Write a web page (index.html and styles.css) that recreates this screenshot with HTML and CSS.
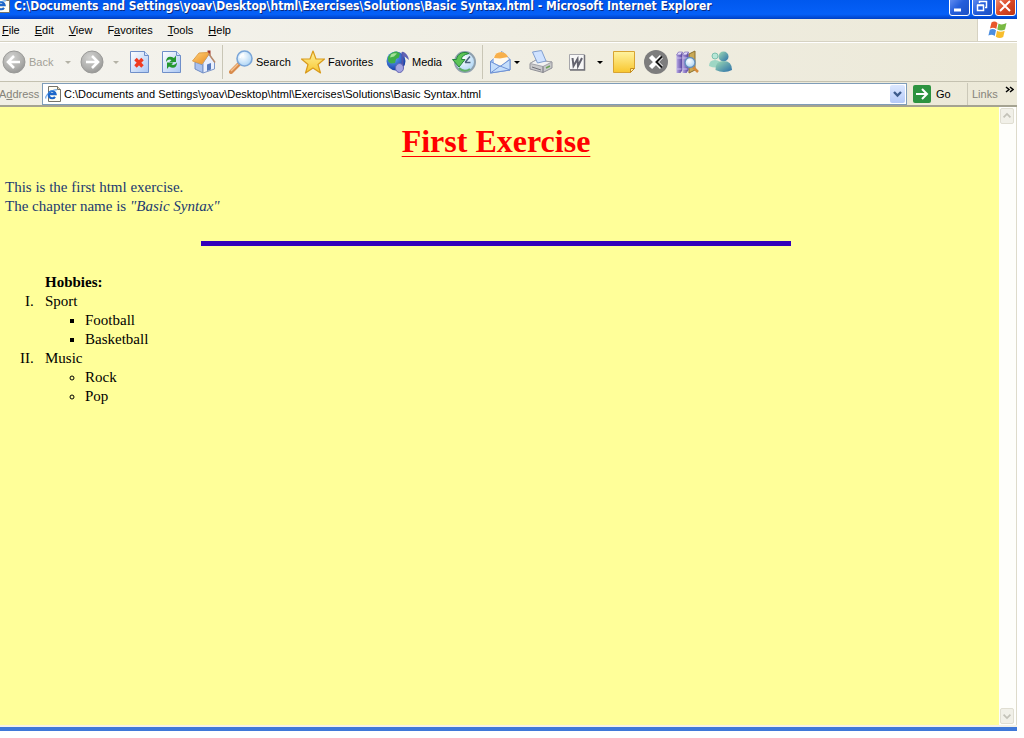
FILE: index.html
```html
<!DOCTYPE html>
<html lang="en">
<head>
<meta charset="utf-8">
<title>Basic Syntax</title>
<link rel="stylesheet" href="styles.css">
</head>
<body>
<svg width="0" height="0" class="defs" aria-hidden="true">
  <defs>
    <radialGradient id="gray" cx=".4" cy=".3" r=".8"><stop offset="0" stop-color="#d2d2d0"/><stop offset=".6" stop-color="#b0b0ae"/><stop offset="1" stop-color="#8e8e8c"/></radialGradient>
    <linearGradient id="sheet" x1="0" y1="0" x2="1" y2="1"><stop offset="0" stop-color="#fff"/><stop offset="1" stop-color="#a9c6f3"/></linearGradient>
    <linearGradient id="gold" x1="0" y1="0" x2="0" y2="1"><stop offset="0" stop-color="#fff3a0"/><stop offset="1" stop-color="#f8c62e"/></linearGradient>
    <radialGradient id="lens" cx=".4" cy=".35" r=".7"><stop offset="0" stop-color="#fff"/><stop offset="1" stop-color="#a9d3f5"/></radialGradient>
    <radialGradient id="globe" cx=".35" cy=".3" r=".8"><stop offset="0" stop-color="#6ab0ff"/><stop offset="1" stop-color="#0b2f9c"/></radialGradient>
    <linearGradient id="orange" x1="0" y1="0" x2="1" y2="1"><stop offset="0" stop-color="#ffd27a"/><stop offset="1" stop-color="#ea8a1e"/></linearGradient>
    <linearGradient id="teal" x1="0" y1="0" x2="1" y2="1"><stop offset="0" stop-color="#9fdcb4"/><stop offset="1" stop-color="#2b6fa8"/></linearGradient>
    <linearGradient id="violet" x1="0" y1="0" x2="1" y2="0"><stop offset="0" stop-color="#b9aae6"/><stop offset="1" stop-color="#54409c"/></linearGradient>
    <symbol id="page-e" viewBox="0 0 16 16"><path d="M3.500.500h9l3 3v12h-12z" fill="#fffdf2" stroke="#75736a"/><path d="M12.500.500v3h3" fill="#e8d9b0" stroke="#75736a"/><path d="M10 10.800a3.500 3.500 0 1 1 .6-2.600H4" fill="none" stroke="#1d66c9" stroke-width="2.200"/><path d="M.800 12.500C0 9 6 3.500 12 3.800" fill="none" stroke="#3f8be0"/></symbol>
  </defs>
</svg>
<div class="window">
  <header class="titlebar">
    <svg class="icon16" viewBox="0 0 16 16"><use href="#page-e"/></svg>
    <span class="title">C:\Documents and Settings\yoav\Desktop\html\Exercises\Solutions\Basic Syntax.html - Microsoft Internet Explorer</span>
    <div class="controls">
      <button class="control" aria-label="Minimize"><svg viewBox="0 0 18 18"><path d="M4 13h7" stroke="#fff" stroke-width="3"/></svg></button>
      <button class="control" aria-label="Restore"><svg viewBox="0 0 18 18"><path d="M6.500 6V4.500h7v6H12M6 4.500h8M4.500 8.500h6v5h-6zM4 8h7" fill="none" stroke="#fff" stroke-width="1.500"/></svg></button>
      <button class="control close" aria-label="Close"><svg viewBox="0 0 18 18"><path d="M4 4l10 10M14 4L4 14" stroke="#fff" stroke-width="2"/></svg></button>
    </div>
  </header>

  <nav class="menubar">
    <button><u>F</u>ile</button><button><u>E</u>dit</button><button><u>V</u>iew</button><button>F<u>a</u>vorites</button><button><u>T</u>ools</button><button><u>H</u>elp</button>
    <span class="flag"><svg viewBox="0 0 20 18"><path d="M3.500 1.500Q6.500-.500 9.500 2L8.300 8Q5.500 6 2 7.500z" fill="#e8562a"/><path d="M10.500 2.500Q14 4.500 18.500 2L17 8.500Q13 10.500 9.300 8.500z" fill="#79b943"/><path d="M1.800 8.700Q5 7 8 9.200L6.700 15Q4 13 .400 14.500z" fill="#4c8ee0"/><path d="M9 9.800Q12.500 11.700 16.700 9.700L15.200 16Q11.500 18 7.800 15.700z" fill="#f8bd2c"/></svg></span>
  </nav>

  <div class="toolbar">
    <div class="group back">
      <button class="tool dim" disabled><svg viewBox="0 0 24 24"><circle cx="12" cy="12" r="11" fill="url(#gray)" stroke="#9a9a98"/><path d="M18 12H7M12 6l-6 6 6 6" fill="none" stroke="#fff" stroke-width="2.600"/></svg>Back</button>
      <button class="drop" aria-label="Back history" disabled></button>
    </div>
    <div class="group forward">
      <button class="tool" aria-label="Forward" disabled><svg viewBox="0 0 24 24"><circle cx="12" cy="12" r="11" fill="url(#gray)" stroke="#9a9a98"/><path d="M6 12h11M12 6l6 6-6 6" fill="none" stroke="#fff" stroke-width="2.600"/></svg></button>
      <button class="drop" aria-label="Forward history" disabled></button>
    </div>
    <button class="tool" aria-label="Stop"><svg viewBox="0 0 24 24"><path d="M2.500 1.500h14l4 4v17h-18z" fill="url(#sheet)" stroke="#6f8fc9"/><path d="M16.500 1.500v4h4" fill="#d6e4fb" stroke="#6f8fc9"/><path d="M7.500 9l7 7.500M14.500 9l-7 7.500" stroke="#f03a20" stroke-width="3.400"/></svg></button>
    <button class="tool" aria-label="Refresh"><svg viewBox="0 0 24 24"><path d="M2.500 1.500h14l4 4v17h-18z" fill="url(#sheet)" stroke="#6f8fc9"/><path d="M16.500 1.500v4h4" fill="#d6e4fb" stroke="#6f8fc9"/><path d="M6 12C6 6.500 10 5.500 14 8l2-2.500v6.500h-6.500l2-2Q8.500 8.500 6 12z" fill="#25982f"/><path d="M17 12.500c0 5.500-4 6.500-8 4l-2 2.500v-6.500h6.500l-2 2q3 1.500 5.500-2z" fill="#25982f"/></svg></button>
    <button class="tool" aria-label="Home"><svg viewBox="0 0 24 24"><path d="M15.500.500h3v6h-3z" fill="#a3362b"/><path d="M3 12l8 3v8l-8-4z" fill="#a9c1ee" stroke="#6f8cc2"/><path d="M11 13l6-9 5.500 8v7L11 23z" fill="#e9effd" stroke="#7b95c8"/><path d="M.500 11L7 3l9-.500 1 1.500-7 10z" fill="url(#orange)" stroke="#e0a04a"/><path d="M16.500 3.500l6.500 9" stroke="#b98a68" stroke-width="1.500"/><path d="M15 14.500l4-1.500v6.500l-4 1.500z" fill="#5579bd"/></svg></button>
    <i class="sep"></i>
    <button class="tool search"><svg viewBox="0 0 24 24"><path d="M2 22l8-8" stroke="#d88b4c" stroke-width="4" stroke-linecap="round"/><path d="M2 21l7-7" stroke="#f5c38f" stroke-width="1.500"/><circle cx="15.500" cy="8.500" r="7.500" fill="url(#lens)" stroke="#7ba6d8" stroke-width="1.600"/><path d="M11 8a5 5 0 0 1 4-4" fill="none" stroke="#fff" stroke-width="1.500"/></svg>Search</button>
    <button class="tool favorites"><svg viewBox="0 0 24 24"><path d="M12 1l3 8h8.500l-6.500 5.500L19.500 23 12 18l-7.500 5L7 14.500.500 9H9z" fill="url(#gold)" stroke="#d99b1c" stroke-width="1.200" stroke-linejoin="round"/></svg>Favorites</button>
    <button class="tool media"><svg viewBox="0 0 24 24"><circle cx="10" cy="11" r="9.500" fill="url(#globe)"/><path d="M2 7Q5 1.500 11 1.500l3 2-1 4-3 1.500-1 4-4 .500Q1 12 2 7z" fill="#3fae48"/><path d="M5 4.500q3-2 6-1l-3 3-4 1z" fill="#a4e29a"/><path d="M16.500 2v16" stroke="#5355a8" stroke-width="1.800"/><path d="M16.500 1.500q5.500 2 6.500 8.500l-2-1.500q-1-2-4.500-2z" fill="#6163b4"/><ellipse cx="13.500" cy="18" rx="4" ry="4.500" fill="#a5a5e2" stroke="#6668b4"/></svg>Media</button>
    <button class="tool" aria-label="History"><svg viewBox="0 0 24 24"><circle cx="13" cy="12" r="10" fill="url(#lens)" stroke="#8fa0ae" stroke-width="2"/><path d="M13 12.500l5-6M13 12.500h5.500" stroke="#49617c" stroke-width="1.500"/><path d="M17 3.500C12 1 5.500 3 4.500 9.500H.500L7 17l6-7.500h-3.500q0-4.500 7.500-6z" fill="#5cc456" stroke="#23853c"/><path d="M7 18q5 5 11 1" fill="none" stroke="#5caf67" stroke-width="2"/></svg></button>
    <i class="sep"></i>
    <div class="group mail">
      <button class="tool" aria-label="Mail"><svg viewBox="0 0 24 24"><path d="M1.500 11.500L13 1.500l8 8V20L1.500 23z" fill="#9cbcf0" stroke="#6f92d4"/><path d="M4.500 7Q8 .500 14 2.500L20 9l-8 7-7-3z" fill="#fffaf0"/><path d="M5 8q1-6 7.500-6 5 1 6.500 5l-8 1.500z" fill="#f7b04c"/><path d="M1.500 11.500l9.500 5 10-7V20L1.500 23z" fill="#c5defb" stroke="#6f92d4"/><path d="M1.500 23l9.500-7 10 4" fill="none" stroke="#6f92d4"/></svg></button>
      <button class="drop" aria-label="Mail options"></button>
    </div>
    <button class="tool" aria-label="Print"><svg viewBox="0 0 24 24"><path d="M1 13.500l6-3.500 16 2v6l-9 4.500-13-3.500z" fill="#c9c9cb" stroke="#909096"/><path d="M1 13.500l6-3.500 16 2-9 4.500z" fill="#f2f2f2" stroke="#a2a2a8"/><path d="M3.500 2l9-1.500L17 11l-8.500 2z" fill="#cfe2ff" stroke="#829fce"/><path d="M14 16.500v6M3 17l9 3" stroke="#707078"/><path d="M17 18l4-2" stroke="#6ba256" stroke-width="1.500"/></svg></button>
    <div class="group word">
      <button class="tool" aria-label="Edit with Word"><svg viewBox="0 0 24 24"><path d="M4.500 4.500h15v15h-15z" fill="#f7f7f7" stroke="#a6a6ab"/><path d="M19.500 5v15H5" fill="none" stroke="#717178" stroke-width="1.500"/><path d="M7.500 8l1 8 4-7 .500 7L17 8" fill="none" stroke="#62626e" stroke-width="2"/></svg></button>
      <button class="drop" aria-label="Edit options"></button>
    </div>
    <button class="tool" aria-label="Discuss"><svg viewBox="0 0 24 24"><path d="M1.500 1.500h21v17l-4 4h-17z" fill="url(#gold)" stroke="#d8a432"/><path d="M18.500 22.500v-4h4z" fill="#fff0a4" stroke="#c58d1f"/></svg></button>
    <button class="tool" aria-label="Disconnect"><svg viewBox="0 0 24 24"><circle cx="12" cy="12" r="12" fill="#7d7d7d"/><path d="M6.500 6.500l11 11M17.500 6.500l-11 11" stroke="#fff" stroke-width="4.500"/><path d="M18 6.500l-5.500 5.500 5.500 5.500" fill="none" stroke="#111" stroke-width="2"/></svg></button>
    <button class="tool" aria-label="Research"><svg viewBox="0 0 24 24"><path d="M13 4l6-3v19l-6 3z" fill="#c9a955" stroke="#8a6f30"/><path d="M.500 5l2-3h4v18l-2 3h-4z" fill="url(#violet)"/><path d="M6.500 5l2-3h4v18l-2 3h-4z" fill="url(#violet)"/><path d="M.500 5l2-3h4l-2 3zM6.500 5l2-3h4l-2 3z" fill="#e2dbf8" stroke="#6f5db0" stroke-width=".600"/><path d="M.500 8h5M6.500 8h5M.500 19h5M6.500 19h5" stroke="#cbbfee"/><path d="M17 17l5 5" stroke="#d68b3c" stroke-width="2.500"/><circle cx="14" cy="12.500" r="5" fill="url(#lens)" stroke="#648fbd" stroke-width="1.400"/></svg></button>
    <button class="tool" aria-label="Messenger"><svg viewBox="0 0 24 24"><circle cx="7" cy="6" r="3" fill="#b7e6d6" stroke="#7cc0ae"/><path d="M1 16q0-6 6-6t6 6q-5 3-12 0z" fill="#9ed6c4"/><circle cx="15.500" cy="6.500" r="5" fill="url(#teal)"/><path d="M7.500 20q-.500-9 8-9t8.500 9q-8 4-16.500 0z" fill="url(#teal)"/></svg></button>
  </div>

  <form class="addressbar">
    <label for="address">A<u>d</u>dress</label>
    <div class="field">
      <svg class="icon16" viewBox="0 0 16 16"><use href="#page-e"/></svg>
      <input id="address" type="text" value="C:\Documents and Settings\yoav\Desktop\html\Exercises\Solutions\Basic Syntax.html">
      <button type="button" class="picker" aria-label="Show addresses"><svg viewBox="0 0 15 18"><path d="M4 7l3.500 3.500L11 7" fill="none" stroke="#3d5b8c" stroke-width="2.400"/></svg></button>
    </div>
    <button type="button" class="go"><svg viewBox="0 0 18 18"><rect width="18" height="18" rx="2" fill="#2d9340"/><path d="M3 9h10M9 4l5 5-5 5" fill="none" stroke="#fff" stroke-width="2"/></svg>Go</button>
    <div class="links"><span>Links</span><svg viewBox="0 0 9 8"><path d="M1 1l3 2.500L1 6M5 1l3 2.500L5 6" fill="none" stroke="#000" stroke-width="1.500"/></svg></div>
  </form>

  <div class="viewport">
    <main class="document">
      <h1>First Exercise</h1>
      <p>This is the first html exercise.<br>The chapter name is <em>"Basic Syntax"</em></p>
      <hr>
      <div class="hobbies">
        <h2>Hobbies:</h2>
        <ol>
          <li>Sport<ul class="square"><li>Football</li><li>Basketball</li></ul></li>
          <li>Music<ul class="circle"><li>Rock</li><li>Pop</li></ul></li>
        </ol>
      </div>
    </main>
    <div class="scrollbar">
      <button aria-label="Scroll up" disabled><svg viewBox="0 0 14 15"><path d="M3 9l4-4 4 4" fill="none" stroke="#c3c2b8" stroke-width="2"/></svg></button>
      <button aria-label="Scroll down" disabled><svg viewBox="0 0 14 15"><path d="M3 6l4 4 4-4" fill="none" stroke="#c3c2b8" stroke-width="2"/></svg></button>
    </div>
  </div>
</div>
</body>
</html>
```
FILE: styles.css
```css
* { box-sizing: border-box; }
body {
  margin: 0;
  padding: 0 7px 7px 0;
  height: 100vh;
  background: #fff;
  font: 11px/14px "Liberation Sans", Arial, sans-serif;
  color: #000;
  overflow: hidden;
}
button {
  padding: 0;
  border: 0;
  background: none;
  font: inherit;
  color: inherit;
}
svg { display: block; flex: none; }
.defs { position: absolute; }
.icon16 { width: 16px; height: 16px; }
.window {
  height: 100%;
  display: flex;
  flex-direction: column;
  border-bottom: 4px solid #3f78d8;
  overflow: hidden;
}

.titlebar {
  display: flex;
  align-items: flex-end;
  height: 19px;
  flex: none;
  padding-right: 1px;
  background: linear-gradient(#0058ee, #0560f8 75%, #0040c4);
  color: #fff;
}
.titlebar .icon16 { margin: 0 4px 6px -6px; }
.title {
  flex: 1;
  min-width: 0;
  overflow: hidden;
  white-space: nowrap;
  font: bold 12px/16px "DejaVu Sans Condensed", "DejaVu Sans", sans-serif;
  padding-bottom: 5px;
  text-shadow: 1px 1px #0a2a80;
}
.controls { display: flex; gap: 2px; }
.control {
  width: 21px;
  height: 21px;
  margin-bottom: 3px;
  border: 1px solid #fff;
  border-radius: 3px;
  background: linear-gradient(135deg, #6f97f5, #245edb 50%, #1c50c4);
}
.control.close { background: linear-gradient(135deg, #f0987c, #dc4a28 50%, #bc3414); }
.control svg { width: 18px; height: 18px; }

.menubar {
  display: flex;
  align-items: center;
  height: 23px;
  flex: none;
  padding-left: 2px;
  gap: 15px;
  background: linear-gradient(90deg, #f4f3ee, #ece9d8);
  border-bottom: 1px solid #d6d2c2;
}
.flag {
  align-self: stretch;
  display: grid;
  place-items: center;
  width: 40px;
  margin-left: auto;
  background: #fff;
  border-left: 1px solid #d6d2c2;
}
.flag svg { width: 20px; height: 18px; }

.toolbar {
  display: flex;
  align-items: center;
  gap: 8px;
  height: 40px;
  flex: none;
  padding-left: 2px;
  background: linear-gradient(90deg, #f4f3ee, #ece9d8);
  border-top: 1px solid #fff;
  border-bottom: 1px solid #c4c1b0;
}
.group { display: flex; align-items: center; justify-content: space-between; }
.tool {
  display: flex;
  align-items: center;
  gap: 3px;
  min-width: 24px;
  white-space: nowrap;
}
.tool svg { width: 24px; height: 24px; }
.tool.dim { color: #a3a197; }
.back { width: 70px; }
.forward { width: 40px; }
.mail { width: 32px; }
.word { width: 43px; padding-left: 4px; }
.search { width: 64px; }
.favorites { width: 77px; }
.media { width: 58px; gap: 2px; }
.drop {
  width: 8px;
  height: 24px;
  display: grid;
  place-items: center;
}
.drop::before {
  content: "";
  border: 3px solid transparent;
  border-top-color: #000;
  border-bottom: 0;
}
.drop:disabled::before { border-top-color: #b4b2a6; }
.sep {
  width: 1px;
  height: 34px;
  margin: 0 -2px;
  background: #c9c6b6;
}

.addressbar {
  display: flex;
  align-items: center;
  height: 25px;
  flex: none;
  margin: 0;
  background: linear-gradient(90deg, #f1efe6, #ece9d8);
  border-bottom: 2px solid #a5a391;
}
.addressbar label {
  width: 43px;
  flex: none;
  margin-left: -1px;
  color: #85837a;
}
.field {
  flex: 1;
  min-width: 0;
  display: flex;
  align-items: center;
  height: 22px;
  padding: 1px 1px 1px 2px;
  background: #fff;
  border: 1px solid #7f9db9;
}
.field input {
  flex: 1;
  min-width: 0;
  height: 16px;
  margin-left: 3px;
  padding: 0;
  border: 0;
  outline: 0;
  background: none;
  font: inherit;
}
.picker {
  width: 15px;
  height: 18px;
  border-radius: 2px;
  background: linear-gradient(#dce8ff, #b5caf8);
}
.go {
  display: flex;
  align-items: center;
  gap: 5px;
  width: 54px;
  margin-left: 6px;
}
.go svg { width: 18px; height: 18px; }
.links {
  display: flex;
  justify-content: space-between;
  align-items: center;
  width: 50px;
  height: 22px;
  padding: 0 3px 0 4px;
  border-left: 1px solid #cbc8b8;
  color: #85837a;
}
.links svg { width: 9px; height: 8px; align-self: flex-start; margin-top: 3px; }

.viewport {
  flex: 1;
  min-height: 0;
  display: flex;
  border-bottom: 2px solid #f4f2e8;
}
.document {
  flex: 1;
  padding: 15px 12px 0 5px;
  background: #ff9;
  font: 15px/19px "Liberation Serif", "Times New Roman", serif;
}
.document h1 {
  margin: 0 0 18px;
  text-align: center;
  font-size: 32px;
  line-height: 38px;
  color: #f00;
  text-decoration: underline;
  text-decoration-thickness: 1px;
  text-underline-offset: 4px;
}
.document p { margin: 0; color: #1c3a70; }
.document hr {
  width: 60%;
  height: 5px;
  margin: 25px auto 27px;
  border: 0;
  background: #30b;
}
.hobbies h2 { margin: 0 0 0 40px; font-size: 15px; line-height: 19px; }
.hobbies ol { margin: 0; padding-left: 40px; list-style: upper-roman; }
.hobbies ol > li::marker { content: counter(list-item, upper-roman) ".\a0\a0\a0"; }
.hobbies ul { margin: 0; padding-left: 40px; }
.hobbies ul > li::marker { content: normal; }
.square { list-style: square; }
.circle { list-style: circle; }

.scrollbar {
  display: flex;
  flex-direction: column;
  justify-content: space-between;
  width: 18px;
  padding: 1px 2px 1px 1px;
  background: #fefefb;
  border-right: 1px solid #dedbcb;
}
.scrollbar button {
  height: 16px;
  border: 1px solid #e0ded2;
  border-radius: 2px;
  background: #f1f0e8;
}
.scrollbar svg { width: 12px; height: 14px; }
```
